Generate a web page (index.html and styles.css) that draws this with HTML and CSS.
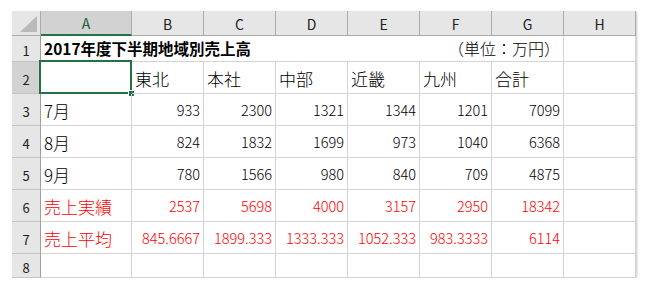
FILE: index.html
```html
<!DOCTYPE html>
<html lang="ja">
<head>
<meta charset="utf-8">
<link rel="stylesheet" href="styles.css">
</head>
<body>
<div class="sheet">
  <div class="corner"><svg class="tri" width="28" height="24" viewBox="0 0 28 24"><polygon points="25,5 25,21 8,21" fill="#b9b9b9"/></svg></div>
  <div class="ch selcol">A</div>
  <div class="ch">B</div>
  <div class="ch">C</div>
  <div class="ch">D</div>
  <div class="ch">E</div>
  <div class="ch">F</div>
  <div class="ch">G</div>
  <div class="ch">H</div>

  <div class="rh">1</div>
  <div class="c title"><span class="bold">2017年度下半期地域別売上高</span><span class="unit">（単位：万円）</span></div>
  <div class="c"></div>

  <div class="rh selrow">2</div>
  <div class="c active"><span class="box"><span class="handle"></span></span></div>
  <div class="c jp">東北</div>
  <div class="c jp">本社</div>
  <div class="c jp">中部</div>
  <div class="c jp">近畿</div>
  <div class="c jp">九州</div>
  <div class="c jp">合計</div>
  <div class="c"></div>

  <div class="rh">3</div>
  <div class="c jp">7月</div>
  <div class="c num">933</div>
  <div class="c num">2300</div>
  <div class="c num">1321</div>
  <div class="c num">1344</div>
  <div class="c num">1201</div>
  <div class="c num">7099</div>
  <div class="c"></div>

  <div class="rh">4</div>
  <div class="c jp">8月</div>
  <div class="c num">824</div>
  <div class="c num">1832</div>
  <div class="c num">1699</div>
  <div class="c num">973</div>
  <div class="c num">1040</div>
  <div class="c num">6368</div>
  <div class="c"></div>

  <div class="rh">5</div>
  <div class="c jp">9月</div>
  <div class="c num">780</div>
  <div class="c num">1566</div>
  <div class="c num">980</div>
  <div class="c num">840</div>
  <div class="c num">709</div>
  <div class="c num">4875</div>
  <div class="c"></div>

  <div class="rh">6</div>
  <div class="c jp red">売上実績</div>
  <div class="c num red">2537</div>
  <div class="c num red">5698</div>
  <div class="c num red">4000</div>
  <div class="c num red">3157</div>
  <div class="c num red">2950</div>
  <div class="c num red">18342</div>
  <div class="c"></div>

  <div class="rh">7</div>
  <div class="c jp red">売上平均</div>
  <div class="c num red">845.6667</div>
  <div class="c num red">1899.333</div>
  <div class="c num red">1333.333</div>
  <div class="c num red">1052.333</div>
  <div class="c num red">983.3333</div>
  <div class="c num red">6114</div>
  <div class="c"></div>

  <div class="rh">8</div>
  <div class="c"></div>
  <div class="c"></div>
  <div class="c"></div>
  <div class="c"></div>
  <div class="c"></div>
  <div class="c"></div>
  <div class="c"></div>
  <div class="c"></div>
</div>
</body>
</html>
```

FILE: styles.css
```css
html, body {
  margin: 0;
  padding: 0;
  background: #ffffff;
}

body {
  padding: 11px 0 0 12px;
  font-family: "Noto Sans CJK JP", "Noto Sans", sans-serif;
  color: #000;
}

.sheet {
  display: grid;
  grid-template-columns: 29px 91px repeat(7, 72px);
  grid-template-rows: 25px 26px repeat(6, 32px) 24px;
  width: 624px;
  box-shadow: 1px 1px 2px rgba(0, 0, 0, 0.22);
}

.sheet > div {
  box-sizing: border-box;
}

.corner {
  background: #e6e6e6;
  border-right: 1px solid #ababab;
  border-bottom: 1px solid #ababab;
  position: relative;
}

.tri {
  display: block;
}

.ch {
  background: #e6e6e6;
  border-right: 1px solid #ababab;
  border-bottom: 1px solid #ababab;
  display: flex;
  align-items: center;
  justify-content: center;
  font-size: 14px;
  line-height: 1;
  color: #222;
  padding-top: 1px;
}

.ch.selcol {
  background: #d2d2d2;
  border-bottom: 2px solid #217346;
  color: #1e5c38;
}

.rh {
  background: #e6e6e6;
  border-right: 1px solid #9f9f9f;
  border-bottom: 1px solid #c4c4c4;
  display: flex;
  align-items: center;
  justify-content: center;
  font-size: 13px;
  line-height: 1;
  color: #222;
  padding-top: 3px;
}

.rh.selrow {
  background: #d2d2d2;
}

.c {
  border-right: 1px solid #d4d4d4;
  border-bottom: 1px solid #d4d4d4;
  display: flex;
  align-items: flex-end;
  line-height: 1;
  white-space: nowrap;
  position: relative;
  font-weight: 300;
}

.title {
  grid-column: span 7;
  justify-content: space-between;
  padding: 0 3px 5px 3px;
}

.bold {
  font-weight: bold;
  font-size: 15.5px;
}

.unit {
  font-size: 16px;
}

.jp {
  font-size: 17px;
  padding: 0 0 6px 3px;
}

.num {
  justify-content: flex-end;
  font-size: 14.5px;
  padding: 0 3px 8px 0;
}

.red {
  color: #ff0000;
}

.active .box {
  position: absolute;
  left: -2px;
  top: -2px;
  right: -1px;
  bottom: -1px;
  border: 2px solid #217346;
}

.active .handle {
  position: absolute;
  right: -5px;
  bottom: -5px;
  width: 5px;
  height: 5px;
  background: #217346;
  border: 1px solid #ffffff;
}
```
